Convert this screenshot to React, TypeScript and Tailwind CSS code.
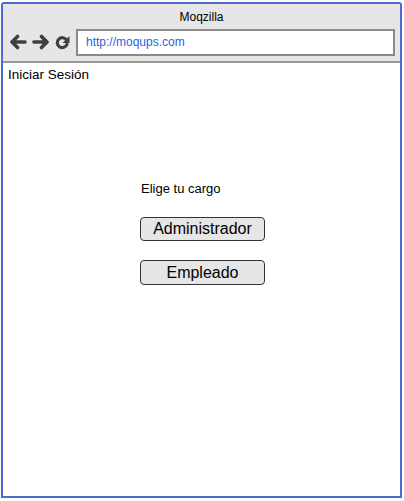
import React from "react";

export default function App() {
  return (
    <div className="w-[404px] h-[501px] bg-white pt-[2px] pl-[1px]" style={{ fontFamily: '"Liberation Sans", Arial, sans-serif' }}>
      <div className="w-[401px] h-[496px] border-2 border-[#4a6bd0] rounded-t-[3px] flex flex-col overflow-hidden">
        <div className="bg-[#e6e6e6] border-b-2 border-[#9a9a9a] h-[59px] flex flex-col">
          <div className="h-[24px] flex items-center justify-center text-[12px] text-black pt-[1px]">Moqzilla</div>
          <div className="flex items-center pl-[6px] pr-[5px] h-[28px]">
            <svg width="18" height="16" viewBox="0 0 18 16" className="mr-[5px]">
              <path d="M16 8H4M8.5 2.5L3 8l5.5 5.5" stroke="#404040" strokeWidth="3.6" fill="none" strokeLinecap="round" strokeLinejoin="round" />
            </svg>
            <svg width="18" height="16" viewBox="0 0 18 16" className="mr-[5px]">
              <path d="M2 8h12M9.5 2.5L15 8l-5.5 5.5" stroke="#404040" strokeWidth="3.6" fill="none" strokeLinecap="round" strokeLinejoin="round" />
            </svg>
            <svg width="15" height="16" viewBox="0 0 15 16" className="mr-[6px]">
              <path d="M11.6 6.2A5 5 0 1 0 12 10.2" stroke="#404040" strokeWidth="3.2" fill="none" strokeLinecap="round" />
              <path d="M14.5 2v7h-7z" fill="#404040" />
            </svg>
            <div className="flex-1 h-[27px] bg-white border-2 border-[#8a8a8a] flex items-center pl-[8px] text-[12px] text-[#2a5fe0]">
              http://moqups.com
            </div>
          </div>
        </div>
        <div className="flex-1 flex flex-col">
          <div className="pl-[5px] pt-[3px] text-[13.5px] text-black leading-[18px]">Iniciar Sesión</div>
          <div className="ml-[137px] mt-[97px] flex flex-col">
            <div className="text-[13px] text-black leading-[16px] ml-[1px]">Elige tu cargo</div>
            <div className="mt-[20px] w-[125px] h-[24px] border border-[#333] rounded-[4px] bg-[#e6e6e6] flex items-center justify-center text-[16px] text-black">
              Administrador
            </div>
            <div className="mt-[19px] w-[125px] h-[25px] border border-[#333] rounded-[4px] bg-[#e6e6e6] flex items-center justify-center text-[16px] text-black">
              Empleado
            </div>
          </div>
        </div>
      </div>
    </div>
  );
}
